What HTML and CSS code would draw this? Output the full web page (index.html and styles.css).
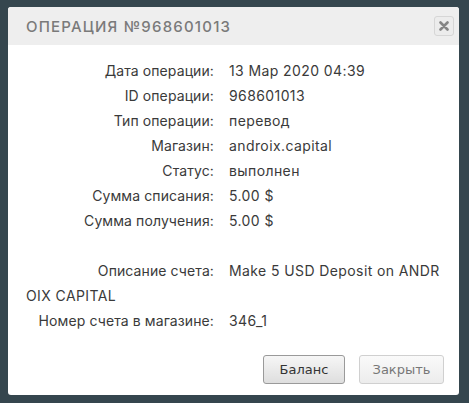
FILE: index.html
```html
<!DOCTYPE html>
<html lang="ru">
<head>
  <meta charset="UTF-8" />
  <title>Операция №968601013</title>
  <link rel="stylesheet" href="styles.css">
</head>
<body>
  <div class="dialog">
    <div class="dialog-head">
      <h2>Операция №968601013</h2>
      <button class="close-x" title="Закрыть">
        <svg width="10" height="10" viewBox="0 0 10 10"><path d="M1.5 1.5L8.5 8.5M8.5 1.5L1.5 8.5" stroke="#858585" stroke-width="2.6" stroke-linecap="round"/></svg>
      </button>
    </div>

    <div class="dialog-body">
      <div class="row"><span class="label">Дата операции:</span>13 Мар 2020 04:39</div>
      <div class="row"><span class="label">ID операции:</span>968601013</div>
      <div class="row"><span class="label">Тип операции:</span>перевод</div>
      <div class="row"><span class="label">Магазин:</span>androix.capital</div>
      <div class="row"><span class="label">Статус:</span>выполнен</div>
      <div class="row"><span class="label">Сумма списания:</span>5.00 $</div>
      <div class="row"><span class="label">Сумма получения:</span>5.00 $</div>
      <div class="row spacer"></div>
      <div class="row wrap"><span class="label">Описание счета:</span>Make 5 USD Deposit on ANDROIX CAPITAL</div>
      <div class="row"><span class="label">Номер счета в магазине:</span>346_1</div>
    </div>

    <div class="dialog-foot">
      <button class="btn">Баланс</button>
      <button class="btn btn-muted">Закрыть</button>
    </div>
  </div>
</body>
</html>
```

FILE: styles.css
```css
* {
  margin: 0;
  padding: 0;
  box-sizing: border-box;
}

body {
  font-family: 'Inter', 'Noto Sans', sans-serif;
  background: #35464e;
  color: #3a3a3a;
  font-size: 14px;
}

.dialog {
  width: 451px;
  margin: 7px 0 0 8px;
  background: #fff;
  border-radius: 3px;
  overflow: hidden;
}

.dialog-head {
  height: 38px;
  background: #eeeeee;
  display: flex;
  align-items: center;
  justify-content: space-between;
  padding: 0 5px 0 18px;
}

.dialog-head h2 {
  font-size: 15px;
  font-weight: 500;
  text-transform: uppercase;
  letter-spacing: 1.2px;
  color: #7a7a7a;
}

.close-x {
  width: 20px;
  height: 20px;
  border: 1px solid #d6d6d6;
  border-radius: 3px;
  background: #ececec;
  display: flex;
  align-items: center;
  justify-content: center;
  cursor: pointer;
}

.dialog-body {
  padding: 13px 18px 0 18px;
}

.row {
  line-height: 25px;
  min-height: 25px;
  letter-spacing: 0.4px;
}

.row.wrap {
  word-break: break-all;
}

.label {
  display: inline-block;
  width: 203px;
  padding-right: 15px;
  text-align: right;
  letter-spacing: 0.1px;
  word-break: normal;
}

.dialog-foot {
  display: flex;
  justify-content: flex-end;
  gap: 14px;
  padding: 22px 15px 11px 0;
}

.btn {
  height: 29px;
  width: 82px;
  font-family: 'DejaVu Sans', sans-serif;
  font-size: 13px;
  color: #333;
  border: 1px solid #9a9a9a;
  border-radius: 3px;
  background: linear-gradient(#f6f6f6, #dedede);
  cursor: pointer;
}

.btn-muted {
  width: 85px;
  color: #777;
  border-color: #d0d0d0;
  background: linear-gradient(#fafafa, #ececec);
}
```
